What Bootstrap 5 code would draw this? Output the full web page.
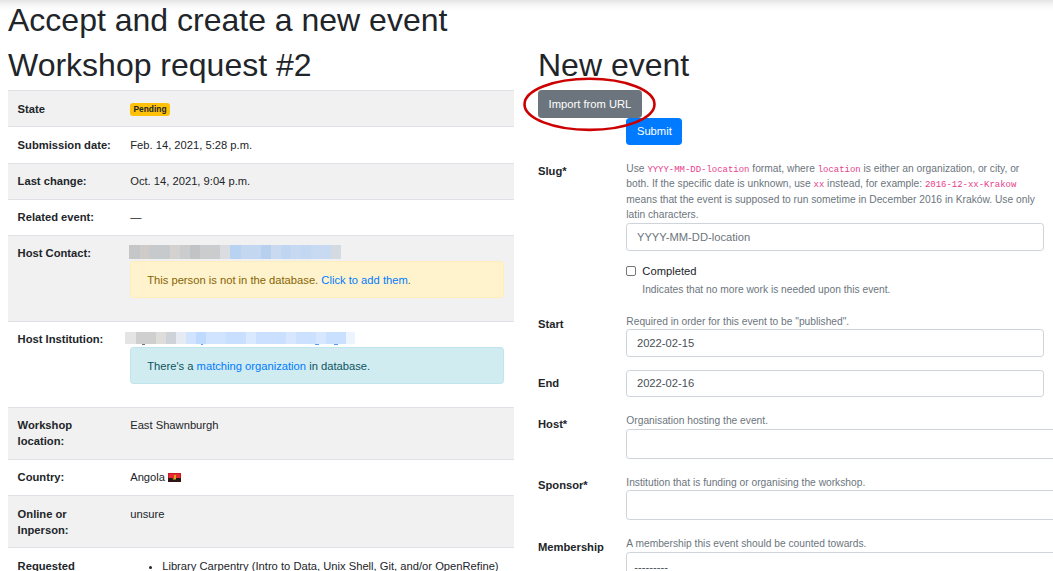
<!DOCTYPE html>
<html lang="en">
<head>
<meta charset="utf-8">
<meta name="viewport" content="width=device-width, initial-scale=1">
<title>Accept and create a new event</title>
<link href="https://cdn.jsdelivr.net/npm/bootstrap@5.3.0/dist/css/bootstrap.min.css" rel="stylesheet">
<style>
html{font-size:12.8px}
body{font-family:"Liberation Sans",Arial,sans-serif;font-size:.875rem;line-height:16.1px;color:#212529;height:100vh;overflow:hidden;background:#fff linear-gradient(#e4e4e4,#f6f6f6 5px,#fff 11px) no-repeat 0 0/100% 11px}
a{color:#007bff;text-decoration:none}
h1,h2{font-size:2.5rem;line-height:1.2;margin-bottom:.5rem;font-weight:400}
h2{padding-top:1px;margin-bottom:5.4px}
.page{width:1060px;margin-left:-4px;padding-top:.6px}
.page .row{--bs-gutter-x:24px}
.page>.row{margin:0}
.page-title{padding-left:12px}
.details{width:506px;table-layout:fixed;margin:0;color:#212529}
.details>tbody>tr>*{padding:9.55px 9.6px;border-bottom:0;border-top:1px solid #dee2e6;vertical-align:top;color:#212529}
.details>tbody>tr:nth-of-type(odd)>*{background:#f1f1f1;box-shadow:none}
.details th{width:112.6px}
.alert{padding:9.4px 16px;margin-bottom:12.9px;border-radius:3.2px}
.alert-warning{background:#fff3cd;border-color:#ffeeba;color:#856404}
.alert-info{background:#d1ecf1;border-color:#bee5eb;color:#0c5460}
.badge{font-size:8.4px;padding:2px 3.3px;border-radius:3px;background:#ffc107;color:#212529;line-height:9px;vertical-align:.5px}
.masked{height:16px}
.masked svg{position:absolute;top:-.4px;left:-1px}
.masked.org svg{top:.6px;left:-5px}
.btn{font-size:.875rem;padding:.375rem .75rem;border-radius:3.2px;line-height:16.1px}
.btn-secondary{--bs-btn-bg:#6c757d}
.btn-primary{--bs-btn-bg:#007bff;--bs-btn-border-color:#007bff;line-height:16px;padding:4.6px 9.6px}
.ring{position:absolute;left:-3px;top:-14px;z-index:2}
.field{margin-bottom:12.7px}
.col-form-label{font-weight:700;padding:5.6px 0 0 12px;font-size:.875rem;line-height:16.1px;white-space:nowrap}
.form-text{font-size:10.24px;line-height:15.5px;margin-top:3.1px;color:#6c757d}
.form-text code{font-size:8.96px;line-height:1;color:#e83e8c;font-family:"Liberation Mono",monospace}
.form-control{font-size:.875rem;padding:.375rem .75rem;border-radius:3.2px;border-color:#ced4da;line-height:16.1px;height:27.7px;min-height:0;color:#495057}
.form-control::placeholder{color:#6c757d}
.pick{height:30.3px;border:1px solid #ced4da;border-radius:3.2px;width:480px;padding:6px 7px;color:#495057;line-height:16px}
.tick{appearance:none;width:10px;height:10px;border:1px solid #767676;border-radius:2px;background:#fff;position:absolute;left:0;top:3px;margin:0}
</style>
</head>
<body>
<main class="page">
  <h1 class="page-title">Accept and create a new event</h1>
  <div class="row">
    <section class="col-6">
      <h2>Workshop request #2</h2>
      <table class="table table-striped details">
        <tbody>
        <tr><th>State</th><td><span class="badge">Pending</span></td></tr>
        <tr><th>Submission date:</th><td>Feb. 14, 2021, 5:28 p.m.</td></tr>
        <tr><th>Last change:</th><td>Oct. 14, 2021, 9:04 p.m.</td></tr>
        <tr><th>Related event:</th><td>—</td></tr>
        <tr><th>Host Contact:</th><td>
          <div class="masked position-relative">
            <svg width="212" height="14" shape-rendering="crispEdges"><path fill="#c5c6c7" d="M0 0h11v14H0z"/><path fill="#cfcbc8" d="M11 0h9v14h-9z"/><path fill="#c6cacd" d="M20 0h21v14H20z"/><path fill="#d3d2d1" d="M41 0h10v14H41z"/><path fill="#cbcccd" d="M51 0h10v14H51z"/><path fill="#c2c3c4" d="M61 0h10v14H61z"/><path fill="#cbccce" d="M71 0h20v14H71z"/><path fill="#dadce2" d="M91 0h10v14H91z"/><path fill="#b8d2f2" d="M101 0h11v14h-11z"/><path fill="#c3d7f0" d="M112 0h20v14h-20z"/><path fill="#b7d0f0" d="M132 0h10v14h-10z"/><path fill="#c9daf0" d="M142 0h10v14h-10z"/><path fill="#bfd5f1" d="M152 0h10v14h-10z"/><path fill="#c6d9f1" d="M162 0h10v14h-10z"/><path fill="#c2d7f1" d="M172 0h10v14h-10z"/><path fill="#c8daf1" d="M182 0h20v14h-20z"/><path fill="#d4d9e2" d="M202 0h10v14h-10z"/></svg>
          </div>
          <div class="alert alert-warning">This person is not in the database. <a href="#">Click to add them</a>.</div></td></tr>
        <tr><th>Host Institution:</th><td>
          <div class="masked org position-relative">
            <svg width="230" height="13" shape-rendering="crispEdges"><path fill="#e4e4e4" d="M0 0h11v12H0z"/><path fill="#cfcfd0" d="M11 0h20v12H11z"/><path fill="#dfddda" d="M31 0h10v12H31z"/><path fill="#cdd3d8" d="M41 0h10v12H41z"/><path fill="#e6ebf3" d="M51 0h10v12H51z"/><path fill="#d0e3ff" d="M61 0h10v12H61z"/><path fill="#bfdaff" d="M71 0h10v12H71z"/><path fill="#d0e4ff" d="M81 0h20v12H81z"/><path fill="#c8dfff" d="M101 0h20v12h-20z"/><path fill="#d9e9ff" d="M121 0h10v12h-10z"/><path fill="#cbe0ff" d="M131 0h30v12h-30z"/><path fill="#d6e7ff" d="M161 0h10v12h-10z"/><path fill="#cce1ff" d="M171 0h20v12h-20z"/><path fill="#d6e7ff" d="M191 0h10v12h-10z"/><path fill="#cae0ff" d="M201 0h20v12h-20z"/><path fill="#ecf4ff" d="M221 0h9v12h-9z"/><path fill="#6f7377" d="M17 12h3v1h-3z"/><path fill="#4d9fff" d="M76 12h2v1h-2zM190 12h4v1h-4zM209 12h4v1h-4z"/></svg>
          </div>
          <div class="alert alert-info">There's a <a href="#">matching organization</a> in database.</div></td></tr>
        <tr><th>Workshop location:</th><td>East Shawnburgh</td></tr>
        <tr><th>Country:</th><td>Angola <svg width="13" height="9" viewBox="0 0 13 9" style="vertical-align:-1px"><path fill="#e52a32" d="M0 0h13v5H0z"/><path fill="#1e1a1a" d="M0 5h13v4H0z"/><path d="M.5.5h12v8H.5z" fill="none" stroke="#800" stroke-opacity=".35"/><path d="M6 2h2v4.5H4.8V5.2H6z" fill="#e0a31c"/></svg></td></tr>
        <tr><th>Online or Inperson:</th><td>unsure</td></tr>
        <tr><th>Requested workshop types:</th><td><ul class="mb-0" style="padding-left:32px"><li>Library Carpentry (Intro to Data, Unix Shell, Git, and/or OpenRefine)</li></ul></td></tr>
        </tbody>
      </table>
    </section>
    <section class="col-6 position-relative">
      <h2>New event</h2>
      <div class="position-relative" style="margin-left:-12px;padding-left:12px">
        <button class="btn btn-secondary d-block" type="button">Import from URL</button>
        <svg class="ring" width="134" height="56"><ellipse cx="66.5" cy="28.3" rx="65" ry="25.6" fill="none" stroke="#c00" stroke-width="2.6"/></svg>
      </div>
      <form>
        <div class="row field"><div class="col-10 offset-2"><button class="btn btn-primary d-block" type="button">Submit</button></div></div>
        <div class="row field"><label class="col-2 col-form-label">Slug*</label><div class="col-10">
          <div class="form-text">Use <code>YYYY-MM-DD-location</code> format, where <code>location</code> is either an organization, or city, or both. If the specific date is unknown, use <code>xx</code> instead, for example: <code>2016-12-xx-Krakow</code> means that the event is supposed to run sometime in December 2016 in Kraków. Use only latin characters.</div>
          <input class="form-control" placeholder="YYYY-MM-DD-location"></div></div>
        <div class="row field"><div class="col-10 offset-2"><div class="position-relative" style="padding-left:16px"><input type="checkbox" class="tick" id="done"><label class="d-block" for="done">Completed</label><div class="form-text">Indicates that no more work is needed upon this event.</div></div></div></div>
        <div class="row field"><label class="col-2 col-form-label">Start</label><div class="col-10"><div class="form-text">Required in order for this event to be "published".</div><input class="form-control" value="2022-02-15"></div></div>
        <div class="row field"><label class="col-2 col-form-label">End</label><div class="col-10"><input class="form-control" value="2022-02-16"></div></div>
        <div class="row field"><label class="col-2 col-form-label">Host*</label><div class="col-10"><div class="form-text">Organisation hosting the event.</div><div class="pick"></div></div></div>
        <div class="row field"><label class="col-2 col-form-label">Sponsor*</label><div class="col-10"><div class="form-text">Institution that is funding or organising the workshop.</div><div class="pick"></div></div></div>
        <div class="row field"><label class="col-2 col-form-label">Membership</label><div class="col-10"><div class="form-text">A membership this event should be counted towards.</div><div class="pick">---------</div></div></div>
      </form>
    </section>
  </div>
</main>
<script src="https://cdn.jsdelivr.net/npm/bootstrap@5.3.0/dist/js/bootstrap.bundle.min.js"></script>
</body>
</html>
